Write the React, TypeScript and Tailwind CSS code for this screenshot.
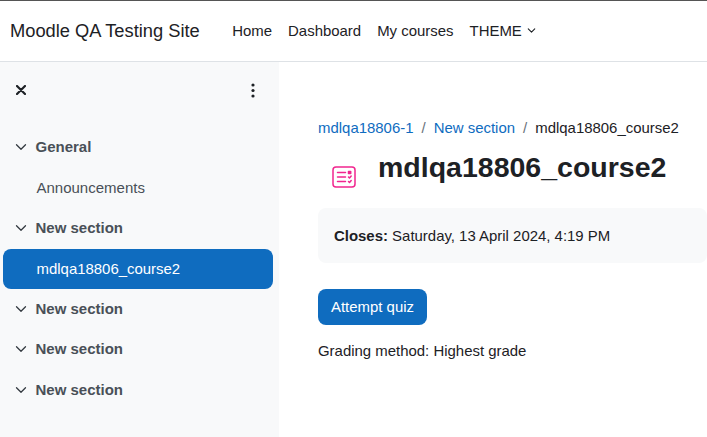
import { ChevronDown } from 'lucide-react';

const font = "font-['Liberation_Sans',Arial,sans-serif]";

function SectionRow({ label }: { label: string }) {
  return (
    <div className="h-[40.5px] flex items-center pl-[11.5px] text-[15px] font-bold text-[#495057]">
      <ChevronDown size={18} strokeWidth={1.7} className="mr-[6px] text-[#343a40]" />
      {label}
    </div>
  );
}

export default function App() {
  return (
    <div className={`${font} w-[707px] h-[437px] overflow-hidden bg-white text-[15px] text-[#1d2125] flex flex-col`}>
      <header className="h-[62px] shrink-0 border-t border-t-[#555] border-b border-b-[#dee2e6] flex items-center pl-[10px]">
        <span className="text-[18.3px] mr-[32.5px]">Moodle QA Testing Site</span>
        <nav className="flex items-center gap-[16px] text-[14.95px]">
          <span>Home</span>
          <span>Dashboard</span>
          <span>My courses</span>
          <span className="flex items-center gap-[3px]">THEME <ChevronDown size={13} strokeWidth={2} /></span>
        </nav>
      </header>
      <div className="flex flex-1 min-h-0">
        <aside className="w-[279px] shrink-0 bg-[#f8f9fa]">
          <div className="h-[56px] flex items-center justify-between pl-[16px] pr-[24px]">
            <svg width="10" height="10" viewBox="0 0 10 10" stroke="#1d2125" strokeWidth="2.2" strokeLinecap="round"><path d="M1 1l8 8M9 1l-8 8" /></svg>
            <svg width="4" height="15" viewBox="0 0 4 15" fill="#1d2125"><circle cx="2" cy="2" r="1.6" /><circle cx="2" cy="7.5" r="1.6" /><circle cx="2" cy="13" r="1.6" /></svg>
          </div>
          <div className="mt-[9px]">
            <SectionRow label="General" />
            <div className="h-[40.5px] flex items-center pl-[36.5px] text-[#495057]">Announcements</div>
            <SectionRow label="New section" />
            <div className="h-[40px] mx-[3px] w-[270px] rounded-lg bg-[#0f6cbf] text-white flex items-center pl-[33.5px] pt-[1px] text-[14.95px]">mdlqa18806_course2</div>
            <SectionRow label="New section" />
            <SectionRow label="New section" />
            <SectionRow label="New section" />
          </div>
        </aside>
        <main className="flex-1 min-w-0 pl-[39px] pt-[55px] text-[14.95px]">
          <div className="flex items-center gap-[8px] text-[#0f6cbf]">
            <span>mdlqa18806-1</span>
            <span className="text-[#6a737b]">/</span>
            <span>New section</span>
            <span className="text-[#6a737b]">/</span>
            <span className="text-[#1d2125]">mdlqa18806_course2</span>
          </div>
          <div className="flex items-start mt-[9px] h-[45px]">
            <svg width="24" height="22" viewBox="0 0 24 22" fill="none" stroke="#f1268f" strokeWidth="1.5" strokeLinecap="round" strokeLinejoin="round" className="ml-[14px] mt-[17.5px]">
              <rect x="1" y="1" width="22" height="20" rx="3" />
              <path d="M5.5 6.5h8M5.5 11h8M5.5 15.5h8" />
              <path d="M16.5 5.5h2.2v2h-2.2z" fill="#f1268f" />
              <path d="M16.5 11l1 1 1.7-2M16.5 15.5l1 1 1.7-2" />
            </svg>
            <h1 className="ml-[22px] mt-[2px] text-[28.5px] leading-[34px] font-bold text-[#1d2125]">mdlqa18806_course2</h1>
          </div>
          <div className="mt-[15px] h-[55px] rounded-lg bg-[#f8f9fa] flex items-center pl-[16px]">
            <b>Closes:</b>&nbsp;Saturday, 13 April 2024, 4:19 PM
          </div>
          <button className="mt-[26px] h-[36px] px-[13px] rounded-lg bg-[#0f6cbf] text-white">Attempt quiz</button>
          <p className="mt-[15px]">Grading method: Highest grade</p>
        </main>
      </div>
    </div>
  );
}
